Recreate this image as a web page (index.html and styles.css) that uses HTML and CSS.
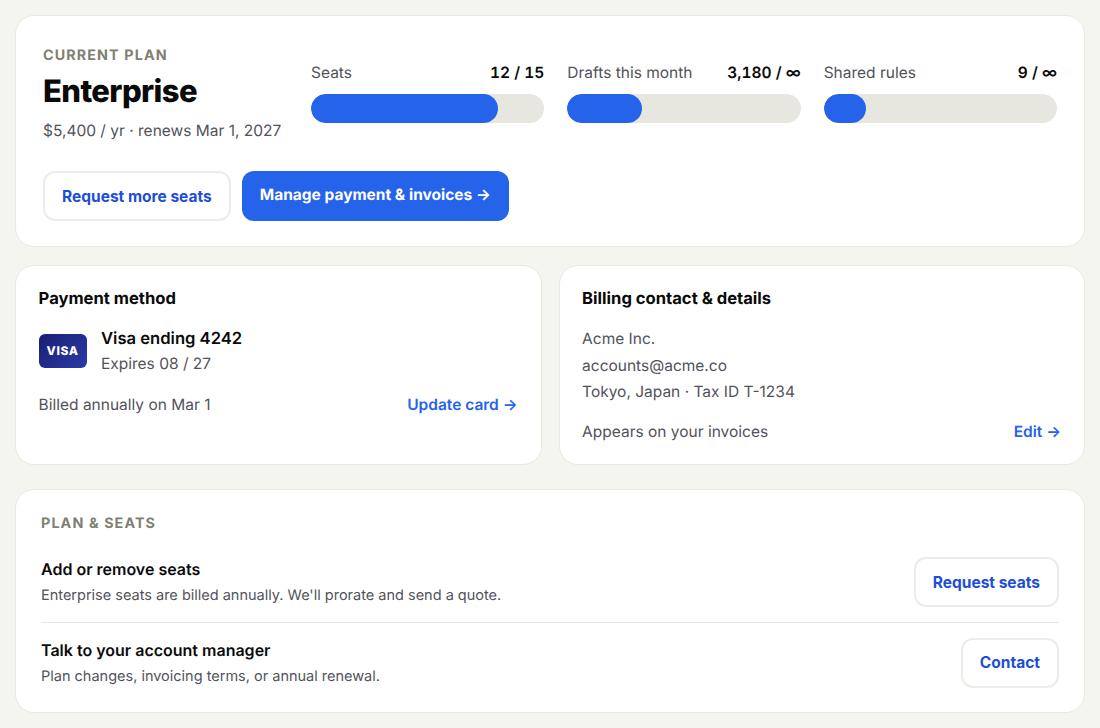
FILE: index.html
```html
<!DOCTYPE html>
<html lang="en">
<head>
    <meta charset="UTF-8">
    <meta name="viewport" content="width=device-width, initial-scale=1.0">
    <title>Billing</title>
    <link rel="stylesheet" href="styles.css">
</head>
<body>
    <div class="billing">
        <section class="card plan">
            <div class="plan-top">
                <div class="plan-info">
                    <div class="eyebrow">Current plan</div>
                    <h1>Enterprise</h1>
                    <p class="plan-price">$5,400 / yr · renews Mar 1, 2027</p>
                </div>
                <div class="meters">
                    <div class="meter">
                        <div class="meter-head"><span>Seats</span><b>12 / 15</b></div>
                        <div class="bar"><div class="fill" style="width: 80%"></div></div>
                    </div>
                    <div class="meter">
                        <div class="meter-head"><span>Drafts this month</span><b>3,180 / ∞</b></div>
                        <div class="bar"><div class="fill" style="width: 32%"></div></div>
                    </div>
                    <div class="meter">
                        <div class="meter-head"><span>Shared rules</span><b>9 / ∞</b></div>
                        <div class="bar"><div class="fill" style="width: 18%"></div></div>
                    </div>
                </div>
            </div>
            <div class="plan-actions">
                <button class="btn">Request more seats</button>
                <a class="btn-primary" href="#">Manage payment &amp; invoices →</a>
            </div>
        </section>

        <div class="columns">
            <section class="card detail">
                <h2>Payment method</h2>
                <div class="pay-row">
                    <div class="visa">VISA</div>
                    <div>
                        <div class="pay-name">Visa ending 4242</div>
                        <div class="pay-exp">Expires 08 / 27</div>
                    </div>
                </div>
                <div class="card-foot">
                    <span>Billed annually on Mar 1</span>
                    <a href="#">Update card →</a>
                </div>
            </section>
            <section class="card detail">
                <h2>Billing contact &amp; details</h2>
                <div class="address">
                    Acme Inc.<br>
                    accounts@acme.co<br>
                    Tokyo, Japan · Tax ID T-1234
                </div>
                <div class="card-foot">
                    <span>Appears on your invoices</span>
                    <a href="#">Edit →</a>
                </div>
            </section>
        </div>

        <section class="card seats">
            <div class="eyebrow">Plan &amp; seats</div>
            <div class="row">
                <div>
                    <div class="row-title">Add or remove seats</div>
                    <div class="row-text">Enterprise seats are billed annually. We'll prorate and send a quote.</div>
                </div>
                <button class="btn">Request seats</button>
            </div>
            <div class="row">
                <div>
                    <div class="row-title">Talk to your account manager</div>
                    <div class="row-text">Plan changes, invoicing terms, or annual renewal.</div>
                </div>
                <button class="btn">Contact</button>
            </div>
        </section>
    </div>
</body>
</html>
```
FILE: styles.css
```css
* {
    box-sizing: border-box;
}
body {
    margin: 0;
    padding: 15px;
    font-family: Inter, sans-serif;
    font-size: 15.5px;
    line-height: 24px;
    color: #0a0a0a;
    background-color: #f5f5f0;
    text-rendering: geometricPrecision;
}
h1, h2, p {
    margin: 0;
}
a {
    text-decoration: none;
}
.card {
    background-color: #fff;
    border: 1px solid #e9e8e2;
    border-radius: 19px;
}
.eyebrow {
    font-size: 14.3px;
    font-weight: 700;
    line-height: 20px;
    letter-spacing: 1.12px;
    text-transform: uppercase;
    color: #7f7f73;
}

/* current plan */
.plan {
    height: 232px;
    padding: 30px 27px 0;
}
.plan-top {
    display: flex;
}
.plan-info {
    flex: 0 0 268px;
}
.plan h1 {
    margin-top: 6px;
    font-size: 31px;
    font-weight: 800;
    line-height: 40px;
    letter-spacing: -0.6px;
}
.plan-price {
    margin-top: 7px;
    color: #52525b;
}
.meters {
    flex: 1;
    display: grid;
    grid-template-columns: repeat(3, 1fr);
    gap: 23px;
    padding-top: 15px;
}
.meter-head {
    display: flex;
    justify-content: space-between;
    margin-bottom: 9px;
    color: #52525b;
}
.meter-head b {
    font-weight: 600;
    font-variant-numeric: tabular-nums;
    color: #0a0a0a;
}
.bar {
    height: 29px;
    border-radius: 15px;
    background-color: #e7e6df;
    overflow: hidden;
}
.fill {
    height: 100%;
    border-radius: 15px;
    background-color: #2563eb;
}
.plan-actions {
    display: flex;
    gap: 11px;
    margin-top: 28px;
}
.btn {
    height: 50px;
    padding: 0 17px;
    border: 2px solid #edece7;
    border-radius: 12px;
    background-color: #fff;
    font-family: inherit;
    font-size: 15.5px;
    font-weight: 700;
    color: #1d4ed8;
    white-space: nowrap;
}
.btn-primary {
    padding: 12px 18px 14px;
    border-radius: 12px;
    background-color: #2563eb;
    font-weight: 700;
    color: #fff;
}

/* payment + contact */
.columns {
    display: grid;
    grid-template-columns: 1fr 1fr;
    gap: 17px;
    margin-top: 18px;
}
.detail {
    height: 200px;
    padding: 21px 23px 0 22.6px;
}
.detail h2 {
    font-size: 16.6px;
    font-weight: 700;
    line-height: 24px;
}
.pay-row {
    display: flex;
    align-items: center;
    gap: 14.4px;
    margin-top: 15px;
}
.visa {
    width: 48px;
    height: 34px;
    margin-top: -1px;
    border-radius: 6px;
    background: linear-gradient(135deg, #1a1f71, #2a3aa8);
    font-size: 12px;
    font-weight: 800;
    line-height: 34px;
    letter-spacing: 0.6px;
    text-align: center;
    color: #fff;
}
.pay-name {
    font-size: 16.6px;
    font-weight: 600;
    line-height: 26px;
}
.pay-exp {
    line-height: 24px;
    color: #52525b;
}
.pay-row + .card-foot {
    margin-top: 17px;
}
.address {
    margin-top: 15px;
    line-height: 26.5px;
    color: #52525b;
}
.card-foot {
    display: flex;
    justify-content: space-between;
    margin-top: 14px;
    color: #52525b;
}
.card-foot a {
    font-weight: 600;
    color: #2563eb;
}

/* plan & seats */
.seats {
    height: 224px;
    margin-top: 24px;
    padding: 24px 25px 0;
}
.seats .eyebrow {
    margin-bottom: 8px;
}
.row {
    display: flex;
    align-items: center;
    justify-content: space-between;
    height: 80px;
}
.row + .row {
    border-top: 1px solid #e9e8e2;
}
.row-title {
    font-size: 16px;
    font-weight: 600;
    line-height: 26px;
}
.row-text {
    padding-top: 1px;
    font-size: 14.5px;
    line-height: 25px;
    color: #52525b;
}
```
